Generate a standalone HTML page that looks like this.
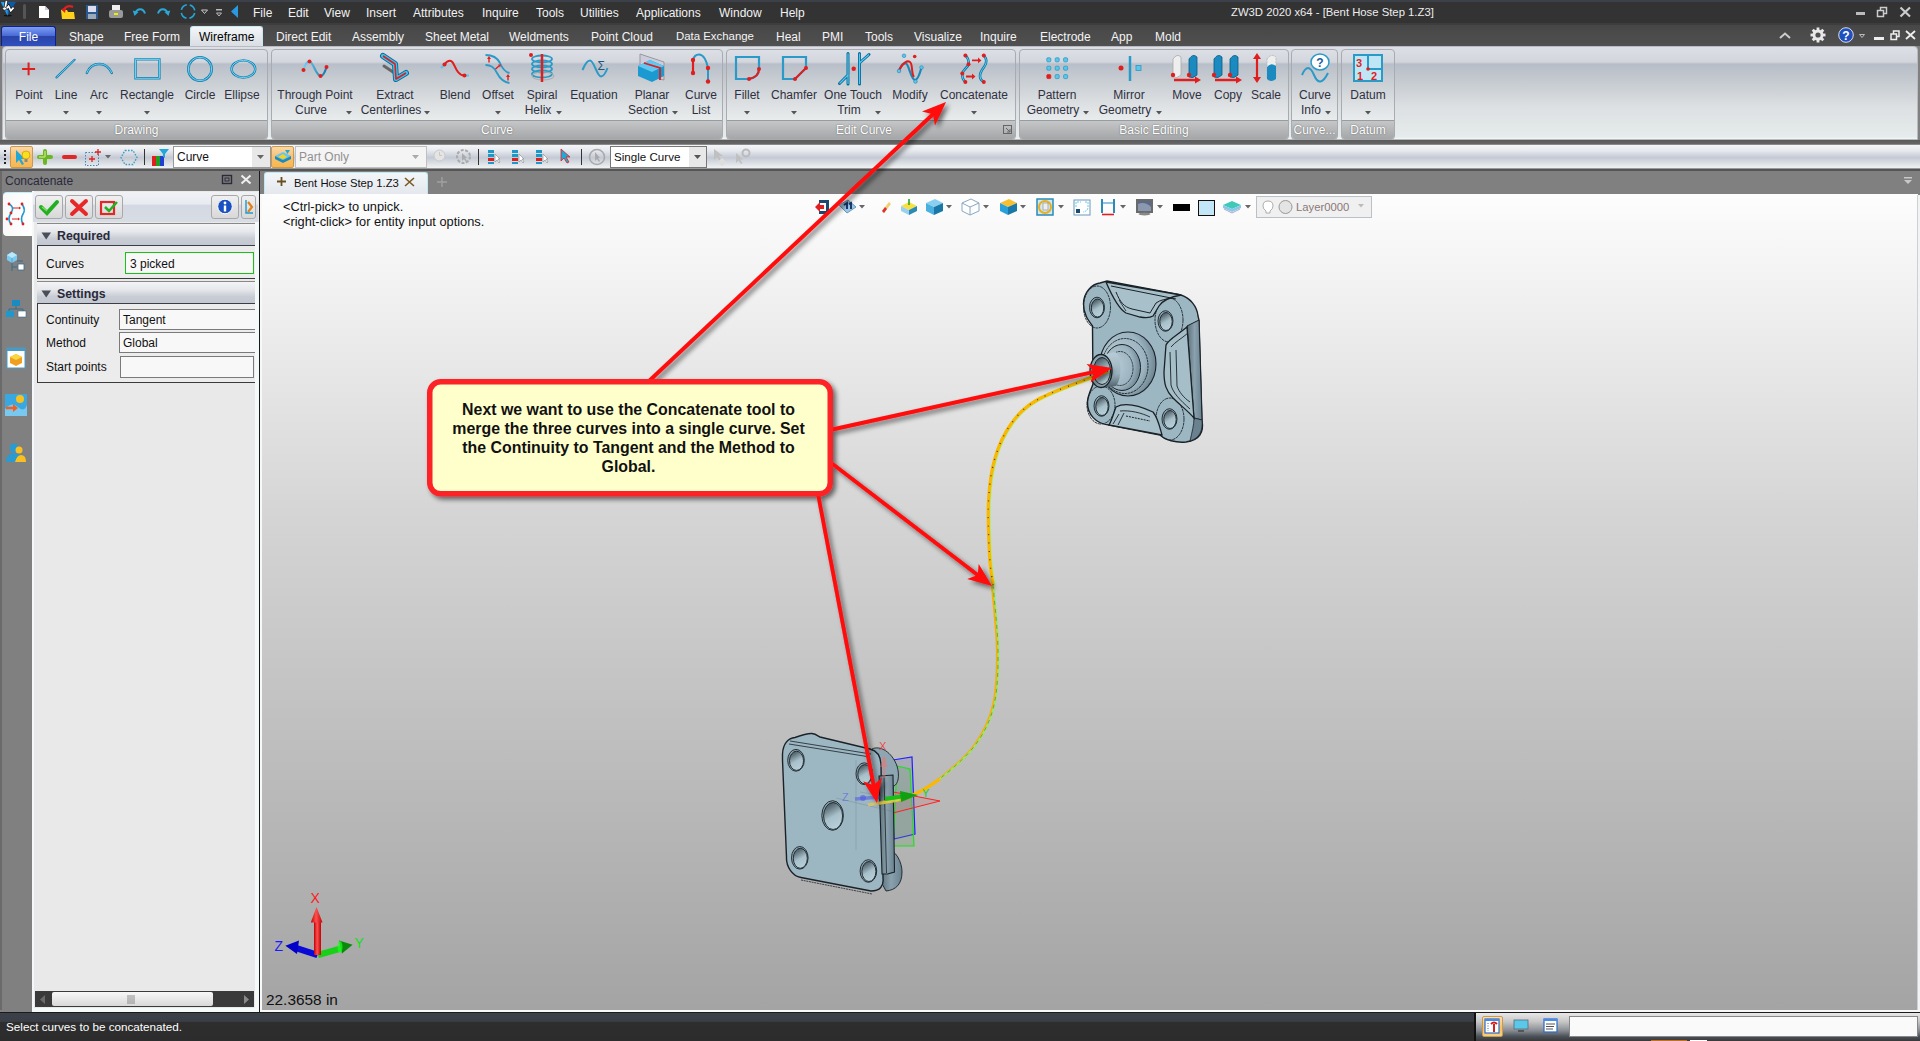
<!DOCTYPE html><html><head><meta charset="utf-8"><style>
html,body{margin:0;padding:0;width:1920px;height:1041px;overflow:hidden;background:#808080}
body div{position:absolute;box-sizing:border-box}
.t{white-space:nowrap;line-height:1;font-family:"Liberation Sans",sans-serif}
svg{overflow:visible}
</style></head><body>
<div style="left:0px;top:0px;width:1920px;height:23px;background:#333333"></div>
<div style="left:0px;top:0px;width:1920px;height:2px;background:#3c4048"></div>
<div style="left:0px;top:23px;width:1920px;height:3px;background:#3d3d3d"></div>
<div style="left:0px;top:25px;width:1920px;height:21px;background:linear-gradient(#474747,#505050)"></div>
<svg style="position:absolute;left:0px;top:0px;" width="18" height="18" viewBox="0 0 18 18"><ellipse cx="7.8" cy="15.6" rx="4" ry="0.9" fill="#111"/><path d="M0.8 1.9 L16 1.9 L7.5 15.8Z" fill="#0a5aa8"/><path d="M0.8 1.9 L8 2 L7.5 15.8Z" fill="#2a9ae8"/><path d="M3 3 L8 5 L5 8Z" fill="#30d0f8"/><path d="M6.5 0.8 L5.3 7.2 M13.6 7.6 L10.8 10.6 L8.6 6.2 L6 9" stroke="#111" stroke-width="3.2" fill="none"/><path d="M6.5 0.8 L5.3 7.2 M13.6 7.6 L10.8 10.6 L8.6 6.2 L6 9" stroke="#fff" stroke-width="1.8" fill="none"/><ellipse cx="4.6" cy="8.6" rx="1.9" ry="1.6" fill="#fff" stroke="#111" stroke-width="0.6"/></svg>
<div style="left:23px;top:4px;width:3px;height:15px;background:#555;border-radius:2px"></div>
<svg style="position:absolute;left:38px;top:5px;" width="12" height="14" viewBox="0 0 12 14"><path d="M1 1 H7 L11 5 V13 H1 Z" fill="#fff"/><path d="M7 1 V5 H11" fill="#ccd" /></svg>
<svg style="position:absolute;left:60px;top:4px;" width="17" height="16" viewBox="0 0 17 16"><path d="M2 8 H14 L15 15 H3 Z" fill="#f5c000"/><path d="M1 6 H7 L8 8 H14 V15 H2Z" fill="#ffd21a"/><path d="M3 7 Q7 0 13 3" stroke="#e02020" stroke-width="2.2" fill="none"/><path d="M1 5 L5 9 L6 4Z" fill="#e02020"/></svg>
<svg style="position:absolute;left:85px;top:4px;" width="14" height="16" viewBox="0 0 14 16"><rect x="1" y="1" width="12" height="14" fill="#2a5a90"/><rect x="3" y="2" width="8" height="6" fill="#dde"/><rect x="3" y="10" width="8" height="5" fill="#9ab"/></svg>
<svg style="position:absolute;left:108px;top:5px;" width="16" height="14" viewBox="0 0 16 14"><rect x="4" y="0" width="8" height="5" fill="#eee"/><rect x="1" y="5" width="14" height="8" rx="2" fill="#999"/><rect x="6" y="8" width="4" height="2" fill="#ee0"/></svg>
<svg style="position:absolute;left:132px;top:7px;" width="14" height="9" viewBox="0 0 14 9"><path d="M3.5 6 C5 1.5 11 0.5 13 6.5" stroke="#2aa8d8" stroke-width="2" fill="none"/><path d="M0.8 3.5 L6.5 5 L2.5 9Z" fill="#2aa8d8"/></svg>
<svg style="position:absolute;left:157px;top:7px;" width="14" height="9" viewBox="0 0 14 9"><path d="M10.5 6 C9 1.5 3 0.5 1 6.5" stroke="#2aa8d8" stroke-width="2" fill="none"/><path d="M13.2 3.5 L7.5 5 L11.5 9Z" fill="#2aa8d8"/></svg>
<svg style="position:absolute;left:180px;top:4px;" width="16" height="16" viewBox="0 0 16 16"><circle cx="8" cy="7.5" r="6.8" stroke="#22a8d8" stroke-width="1.6" fill="none" stroke-dasharray="7.7 3" stroke-dashoffset="9.2"/></svg>
<svg style="position:absolute;left:201px;top:9px;" width="7" height="6" viewBox="0 0 7 6"><path d="M0.5 1 L6.5 1 L3.5 4.5Z" fill="none" stroke="#ccc" stroke-width="1"/></svg>
<svg style="position:absolute;left:216px;top:9px;" width="7" height="8" viewBox="0 0 7 8"><rect x="0" y="0" width="6" height="1.5" fill="#bbb"/><path d="M0.5 4 L5.5 4 L3 7Z" fill="none" stroke="#bbb"/></svg>
<svg style="position:absolute;left:231px;top:5px;" width="8" height="13" viewBox="0 0 8 13"><path d="M7 0 L0 6.5 L7 13Z" fill="#2a9ae0"/></svg>
<div class="t" style="left:253px;top:6.8px;font-size:12px;color:#f2f2f2;font-weight:400;">File</div>
<div class="t" style="left:288px;top:6.8px;font-size:12px;color:#f2f2f2;font-weight:400;">Edit</div>
<div class="t" style="left:324px;top:6.8px;font-size:12px;color:#f2f2f2;font-weight:400;">View</div>
<div class="t" style="left:366px;top:6.8px;font-size:12px;color:#f2f2f2;font-weight:400;">Insert</div>
<div class="t" style="left:413px;top:6.8px;font-size:12px;color:#f2f2f2;font-weight:400;">Attributes</div>
<div class="t" style="left:482px;top:6.8px;font-size:12px;color:#f2f2f2;font-weight:400;">Inquire</div>
<div class="t" style="left:536px;top:6.8px;font-size:12px;color:#f2f2f2;font-weight:400;">Tools</div>
<div class="t" style="left:580px;top:6.8px;font-size:12px;color:#f2f2f2;font-weight:400;">Utilities</div>
<div class="t" style="left:636px;top:6.8px;font-size:12px;color:#f2f2f2;font-weight:400;">Applications</div>
<div class="t" style="left:719px;top:6.8px;font-size:12px;color:#f2f2f2;font-weight:400;">Window</div>
<div class="t" style="left:780px;top:6.8px;font-size:12px;color:#f2f2f2;font-weight:400;">Help</div>
<div class="t" style="left:1231px;top:7.4px;font-size:11.3px;color:#eeeeee;font-weight:400;">ZW3D 2020 x64 - [Bent Hose Step 1.Z3]</div>
<div style="left:1856px;top:12px;width:9px;height:3px;background:#bbb"></div>
<svg style="position:absolute;left:1876px;top:6px;" width="12" height="12" viewBox="0 0 12 12"><rect x="1.5" y="4.5" width="6" height="6" fill="none" stroke="#ccc" stroke-width="1.5"/><path d="M4.5 4.5 V1.5 H10.5 V7.5 H7.5" fill="none" stroke="#ccc" stroke-width="1.5"/></svg>
<svg style="position:absolute;left:1899px;top:6px;" width="13" height="12" viewBox="0 0 13 12"><path d="M1.5 1.5 L11 10.5 M11 1.5 L1.5 10.5" stroke="#ccc" stroke-width="2.2"/></svg>
<div style="left:1px;top:26px;width:55px;height:20px;background:linear-gradient(#7c9ef0 0%,#4a6ad8 45%,#2a44a8 50%,#3050c0 100%);border:1px solid #10208a;border-bottom:none;border-radius:3px 3px 0 0"></div>
<div class="t" style="left:-271.5px;width:600px;text-align:center;top:30.8px;font-size:12px;color:#ffffff;font-weight:400;">File</div>
<div style="left:190px;top:26px;width:73px;height:21px;background:linear-gradient(#f4f6f8,#d8dde3);border:1px solid #c8e8f0;border-bottom:none;border-radius:3px 3px 0 0"></div>
<div class="t" style="left:69px;top:30.8px;font-size:12px;color:#f4f4f4;font-weight:400;">Shape</div>
<div class="t" style="left:124px;top:30.8px;font-size:12px;color:#f4f4f4;font-weight:400;">Free Form</div>
<div class="t" style="left:199px;top:30.8px;font-size:12px;color:#000;font-weight:400;">Wireframe</div>
<div class="t" style="left:276px;top:30.8px;font-size:12px;color:#f4f4f4;font-weight:400;">Direct Edit</div>
<div class="t" style="left:352px;top:30.8px;font-size:12px;color:#f4f4f4;font-weight:400;">Assembly</div>
<div class="t" style="left:425px;top:30.8px;font-size:12px;color:#f4f4f4;font-weight:400;">Sheet Metal</div>
<div class="t" style="left:509px;top:30.8px;font-size:12px;color:#f4f4f4;font-weight:400;">Weldments</div>
<div class="t" style="left:591px;top:30.8px;font-size:12px;color:#f4f4f4;font-weight:400;">Point Cloud</div>
<div class="t" style="left:676px;top:31.3px;font-size:11.4px;color:#f4f4f4;font-weight:400;">Data Exchange</div>
<div class="t" style="left:776px;top:30.8px;font-size:12px;color:#f4f4f4;font-weight:400;">Heal</div>
<div class="t" style="left:822px;top:30.8px;font-size:12px;color:#f4f4f4;font-weight:400;">PMI</div>
<div class="t" style="left:865px;top:30.8px;font-size:12px;color:#f4f4f4;font-weight:400;">Tools</div>
<div class="t" style="left:914px;top:30.8px;font-size:12px;color:#f4f4f4;font-weight:400;">Visualize</div>
<div class="t" style="left:980px;top:30.8px;font-size:12px;color:#f4f4f4;font-weight:400;">Inquire</div>
<div class="t" style="left:1040px;top:30.8px;font-size:12px;color:#f4f4f4;font-weight:400;">Electrode</div>
<div class="t" style="left:1111px;top:30.8px;font-size:12px;color:#f4f4f4;font-weight:400;">App</div>
<div class="t" style="left:1155px;top:30.8px;font-size:12px;color:#f4f4f4;font-weight:400;">Mold</div>
<svg style="position:absolute;left:1779px;top:32px;" width="12" height="7" viewBox="0 0 12 7"><path d="M1 6 L6 1.5 L11 6" stroke="#ccc" stroke-width="2" fill="none"/></svg>
<svg style="position:absolute;left:1810px;top:27px;" width="16" height="16" viewBox="0 0 16 16"><g fill="#e8e8e8"><circle cx="8" cy="8" r="5.5"/><rect x="6.6" y="0.5" width="2.8" height="4" transform="rotate(0 8 8)"/><rect x="6.6" y="0.5" width="2.8" height="4" transform="rotate(45 8 8)"/><rect x="6.6" y="0.5" width="2.8" height="4" transform="rotate(90 8 8)"/><rect x="6.6" y="0.5" width="2.8" height="4" transform="rotate(135 8 8)"/><rect x="6.6" y="0.5" width="2.8" height="4" transform="rotate(180 8 8)"/><rect x="6.6" y="0.5" width="2.8" height="4" transform="rotate(225 8 8)"/><rect x="6.6" y="0.5" width="2.8" height="4" transform="rotate(270 8 8)"/><rect x="6.6" y="0.5" width="2.8" height="4" transform="rotate(315 8 8)"/></g><circle cx="8" cy="8" r="2.6" fill="#505050"/></svg>
<svg style="position:absolute;left:1838px;top:27px;" width="16" height="16" viewBox="0 0 16 16"><circle cx="8" cy="8" r="7.3" fill="#2050c0" stroke="#fff" stroke-width="0.8"/><text x="8" y="12.5" font-size="12" font-weight="700" fill="#fff" text-anchor="middle" font-family="Liberation Sans">?</text></svg>
<svg style="position:absolute;left:1859px;top:34px;" width="6" height="4" viewBox="0 0 6 4"><path d="M0.5 0.5 L5.5 0.5 L3 3.5Z" fill="none" stroke="#bbb"/></svg>
<div style="left:1874px;top:37px;width:10px;height:3px;background:#eee"></div>
<svg style="position:absolute;left:1890px;top:30px;" width="10" height="11" viewBox="0 0 10 11"><rect x="1" y="4" width="5.5" height="5.5" fill="none" stroke="#eee" stroke-width="1.5"/><path d="M3.5 4 V1 H9 V6.5 H6.5" fill="none" stroke="#eee" stroke-width="1.5"/></svg>
<svg style="position:absolute;left:1905px;top:30px;" width="11" height="10" viewBox="0 0 11 10"><path d="M1 1 L10 9 M10 1 L1 9" stroke="#eee" stroke-width="1.8"/></svg>
<div style="left:2px;top:46px;width:1916px;height:94px;background:linear-gradient(#dcdfe5 0px,#d2d6dc 15px,#b7bdc7 17px,#c6cbd1 35px,#dce0e2 60px,#e6ebec 90px,#f4f8f8 92px);border-radius:4px 4px 0 0;border:1px solid #b8bcc0"></div>
<div style="left:5px;top:49px;width:263px;height:91px;border:1px solid #a8acb0;border-radius:4px;background:linear-gradient(#dcdfe5 0px,#d3d7dd 12px,#b9bfc9 14px,#c8cdd3 30px,#dde1e3 55px,#e8eced 70px)"></div>
<div style="left:6px;top:120px;width:261px;height:19px;background:linear-gradient(#c4c6c8,#a4a6a8);border-top:1px solid #989ca0;border-radius:0 0 3px 3px"></div>
<div class="t" style="left:-163.5px;width:600px;text-align:center;top:123.8px;font-size:12px;color:#ffffff;font-weight:400;text-shadow:0 0 1.5px #555">Drawing</div>
<div style="left:271px;top:49px;width:452px;height:91px;border:1px solid #a8acb0;border-radius:4px;background:linear-gradient(#dcdfe5 0px,#d3d7dd 12px,#b9bfc9 14px,#c8cdd3 30px,#dde1e3 55px,#e8eced 70px)"></div>
<div style="left:272px;top:120px;width:450px;height:19px;background:linear-gradient(#c4c6c8,#a4a6a8);border-top:1px solid #989ca0;border-radius:0 0 3px 3px"></div>
<div class="t" style="left:197.0px;width:600px;text-align:center;top:123.8px;font-size:12px;color:#ffffff;font-weight:400;text-shadow:0 0 1.5px #555">Curve</div>
<div style="left:726px;top:49px;width:290px;height:91px;border:1px solid #a8acb0;border-radius:4px;background:linear-gradient(#dcdfe5 0px,#d3d7dd 12px,#b9bfc9 14px,#c8cdd3 30px,#dde1e3 55px,#e8eced 70px)"></div>
<div style="left:727px;top:120px;width:288px;height:19px;background:linear-gradient(#c4c6c8,#a4a6a8);border-top:1px solid #989ca0;border-radius:0 0 3px 3px"></div>
<div class="t" style="left:564px;width:600px;text-align:center;top:123.8px;font-size:12px;color:#ffffff;font-weight:400;text-shadow:0 0 1.5px #555">Edit Curve</div>
<div style="left:1019px;top:49px;width:270px;height:91px;border:1px solid #a8acb0;border-radius:4px;background:linear-gradient(#dcdfe5 0px,#d3d7dd 12px,#b9bfc9 14px,#c8cdd3 30px,#dde1e3 55px,#e8eced 70px)"></div>
<div style="left:1020px;top:120px;width:268px;height:19px;background:linear-gradient(#c4c6c8,#a4a6a8);border-top:1px solid #989ca0;border-radius:0 0 3px 3px"></div>
<div class="t" style="left:854.0px;width:600px;text-align:center;top:123.8px;font-size:12px;color:#ffffff;font-weight:400;text-shadow:0 0 1.5px #555">Basic Editing</div>
<div style="left:1291px;top:49px;width:47px;height:91px;border:1px solid #a8acb0;border-radius:4px;background:linear-gradient(#dcdfe5 0px,#d3d7dd 12px,#b9bfc9 14px,#c8cdd3 30px,#dde1e3 55px,#e8eced 70px)"></div>
<div style="left:1292px;top:120px;width:45px;height:19px;background:linear-gradient(#c4c6c8,#a4a6a8);border-top:1px solid #989ca0;border-radius:0 0 3px 3px"></div>
<div class="t" style="left:1014.5px;width:600px;text-align:center;top:123.8px;font-size:12px;color:#ffffff;font-weight:400;text-shadow:0 0 1.5px #555">Curve...</div>
<div style="left:1341px;top:49px;width:54px;height:91px;border:1px solid #a8acb0;border-radius:4px;background:linear-gradient(#dcdfe5 0px,#d3d7dd 12px,#b9bfc9 14px,#c8cdd3 30px,#dde1e3 55px,#e8eced 70px)"></div>
<div style="left:1342px;top:120px;width:52px;height:19px;background:linear-gradient(#c4c6c8,#a4a6a8);border-top:1px solid #989ca0;border-radius:0 0 3px 3px"></div>
<div class="t" style="left:1068.0px;width:600px;text-align:center;top:123.8px;font-size:12px;color:#ffffff;font-weight:400;text-shadow:0 0 1.5px #555">Datum</div>
<svg style="position:absolute;left:16px;top:56px;" width="26" height="26" viewBox="0 0 26 26"><path d="M12.6 6.6 V19.3 M6.1 13 H19.1" stroke="#e01e1e" stroke-width="2"/></svg>
<div class="t" style="left:-271px;width:600px;text-align:center;top:88.8px;font-size:12px;color:#303040;font-weight:400;">Point</div>
<svg style="position:absolute;left:26px;top:111px;" width="7" height="4" viewBox="0 0 7 4"><path d="M0 0 L6 0 L3 3.5Z" fill="#555"/></svg>
<svg style="position:absolute;left:53px;top:56px;" width="26" height="26" viewBox="0 0 26 26"><path d="M3.5 21.4 L21.6 3.8" stroke="#1a80b0" stroke-width="2.2" fill="none" stroke-linecap="round"/><path d="M3.5 21.4 L21.6 3.8" stroke="#70d8f8" stroke-width="0.88" fill="none"/></svg>
<div class="t" style="left:-234px;width:600px;text-align:center;top:88.8px;font-size:12px;color:#303040;font-weight:400;">Line</div>
<svg style="position:absolute;left:63px;top:111px;" width="7" height="4" viewBox="0 0 7 4"><path d="M0 0 L6 0 L3 3.5Z" fill="#555"/></svg>
<svg style="position:absolute;left:86px;top:56px;" width="28" height="26" viewBox="0 0 28 26"><path d="M0.8 17 C4 9 10 8 13.3 8 C17 8 22 9 25.8 17" stroke="#1a80b0" stroke-width="2.4" fill="none" stroke-linecap="round"/><path d="M0.8 17 C4 9 10 8 13.3 8 C17 8 22 9 25.8 17" stroke="#70d8f8" stroke-width="0.96" fill="none"/></svg>
<div class="t" style="left:-201px;width:600px;text-align:center;top:88.8px;font-size:12px;color:#303040;font-weight:400;">Arc</div>
<svg style="position:absolute;left:96px;top:111px;" width="7" height="4" viewBox="0 0 7 4"><path d="M0 0 L6 0 L3 3.5Z" fill="#555"/></svg>
<svg style="position:absolute;left:134px;top:56px;" width="28" height="26" viewBox="0 0 28 26"><path d="M1.5 3.4 H25.4 V22.3 H1.5Z" stroke="#1a80b0" stroke-width="2.4" fill="none" stroke-linecap="round"/><path d="M1.5 3.4 H25.4 V22.3 H1.5Z" stroke="#70d8f8" stroke-width="0.96" fill="none"/></svg>
<div class="t" style="left:-153px;width:600px;text-align:center;top:88.8px;font-size:12px;color:#303040;font-weight:400;">Rectangle</div>
<svg style="position:absolute;left:144px;top:111px;" width="7" height="4" viewBox="0 0 7 4"><path d="M0 0 L6 0 L3 3.5Z" fill="#555"/></svg>
<svg style="position:absolute;left:187px;top:56px;" width="26" height="26" viewBox="0 0 26 26"><circle cx="13" cy="13" r="11.7" stroke="#1a80b0" stroke-width="2.6" fill="none"/><circle cx="13" cy="13" r="11.7" stroke="#70d8f8" stroke-width="1" fill="none"/></svg>
<div class="t" style="left:-100px;width:600px;text-align:center;top:88.8px;font-size:12px;color:#303040;font-weight:400;">Circle</div>
<svg style="position:absolute;left:230px;top:56px;" width="28" height="26" viewBox="0 0 28 26"><ellipse cx="13.4" cy="13" rx="11.9" ry="8.6" stroke="#1a80b0" stroke-width="2.4" fill="none"/><ellipse cx="13.4" cy="13" rx="11.9" ry="8.6" stroke="#70d8f8" stroke-width="1" fill="none"/></svg>
<div class="t" style="left:-58px;width:600px;text-align:center;top:88.8px;font-size:12px;color:#303040;font-weight:400;">Ellipse</div>
<svg style="position:absolute;left:300px;top:56px;" width="30" height="26" viewBox="0 0 30 26"><defs><linearGradient id="wg" x1="0" x2="1"><stop offset="0" stop-color="#70d0f0"/><stop offset="1" stop-color="#1a78a8"/></linearGradient></defs><path d="M3.5 14 C5 8 7 5.5 9.5 5.5 C13 5.5 16 20 20.5 20 C23 20 25 16 26.5 11" stroke="url(#wg)" stroke-width="2.2" fill="none"/><g fill="#e01e1e"><circle cx="3.5" cy="14" r="2"/><circle cx="9.5" cy="5.5" r="2"/><circle cx="20.5" cy="20" r="2"/><circle cx="26.5" cy="11" r="2"/></g></svg>
<div class="t" style="left:15px;width:600px;text-align:center;top:88.8px;font-size:12px;color:#303040;font-weight:400;">Through Point</div>
<div class="t" style="left:11px;width:600px;text-align:center;top:103.8px;font-size:12px;color:#303040;font-weight:400;">Curve</div>
<svg style="position:absolute;left:346px;top:111px;" width="7" height="4" viewBox="0 0 7 4"><path d="M0 0 L6 0 L3 3.5Z" fill="#555"/></svg>
<svg style="position:absolute;left:378px;top:52px;" width="34" height="34" viewBox="0 0 34 34"><path d="M6 14 L18 22" stroke="#666" stroke-width="3" stroke-linecap="round"/><path d="M5 4 L17 12 L18 27 L28 21" stroke="#0a6a98" stroke-width="6" fill="none" stroke-linejoin="round" stroke-linecap="round"/><path d="M5 4 L17 12 L18 27 L28 21" stroke="#40c0e8" stroke-width="4.2" fill="none" stroke-linejoin="round" stroke-linecap="round"/><path d="M5 4 L17 12 L18 27 L28 21" stroke="#e01e1e" stroke-width="1.6" fill="none" stroke-linejoin="round"/></svg>
<div class="t" style="left:95px;width:600px;text-align:center;top:88.8px;font-size:12px;color:#303040;font-weight:400;">Extract</div>
<div class="t" style="left:91px;width:600px;text-align:center;top:103.8px;font-size:12px;color:#303040;font-weight:400;">Centerlines</div>
<svg style="position:absolute;left:424px;top:111px;" width="7" height="4" viewBox="0 0 7 4"><path d="M0 0 L6 0 L3 3.5Z" fill="#555"/></svg>
<svg style="position:absolute;left:439px;top:56px;" width="32" height="24" viewBox="0 0 32 24"><path d="M2 12 L5.5 8.5" stroke="#5cc6e8" stroke-width="2.2"/><path d="M5.5 8.5 C8 5 10 4.5 12 5 C15 6 16 13 19 16 C21 18.5 23 19.5 25.5 19.5" stroke="#e01e1e" stroke-width="2" fill="none"/><path d="M25.5 19.5 L30 19.5" stroke="#5cc6e8" stroke-width="2.2"/><circle cx="5.5" cy="8.5" r="2" fill="#e01e1e"/><circle cx="25.5" cy="19.5" r="2" fill="#e01e1e"/></svg>
<div class="t" style="left:155px;width:600px;text-align:center;top:88.8px;font-size:12px;color:#303040;font-weight:400;">Blend</div>
<svg style="position:absolute;left:484px;top:53px;" width="28" height="32" viewBox="0 0 28 32"><path d="M1.5 2 C8 2 13 4 16 10 C18 15 21 19 25.5 20" stroke="#2a9ac8" stroke-width="1.8" fill="none"/><path d="M1.5 12 C7 12 10 14 13 20 C16 26 19 29 25.5 30" stroke="#2a9ac8" stroke-width="1.8" fill="none"/><path d="M5 9.5 V5.5 M11.5 16 L15 13 M24 27.5 V23.5" stroke="#e01e1e" stroke-width="1.4"/><path d="M3 6 L5 3 L7 6Z M14 11.5 L17 11.5 L16 14.5Z M22 24 L24 21 L26 24Z" fill="#e01e1e"/></svg>
<div class="t" style="left:198px;width:600px;text-align:center;top:88.8px;font-size:12px;color:#303040;font-weight:400;">Offset</div>
<svg style="position:absolute;left:495px;top:111px;" width="7" height="4" viewBox="0 0 7 4"><path d="M0 0 L6 0 L3 3.5Z" fill="#555"/></svg>
<svg style="position:absolute;left:528px;top:52px;" width="28" height="32" viewBox="0 0 28 32"><g stroke="#2a9ac8" stroke-width="1.8" fill="none"><ellipse cx="14" cy="7" rx="10" ry="3.5"/><ellipse cx="14" cy="12" rx="10" ry="3.5"/><ellipse cx="14" cy="17" rx="10" ry="3.5"/><ellipse cx="14" cy="22" rx="10" ry="3.5"/></g><ellipse cx="15" cy="24" rx="11" ry="4" fill="none" stroke="#aaa" stroke-width="1"/><path d="M14 2 V30" stroke="#e01e1e" stroke-width="2.5"/><circle cx="3" cy="3" r="2" fill="#e01e1e"/></svg>
<div class="t" style="left:242px;width:600px;text-align:center;top:88.8px;font-size:12px;color:#303040;font-weight:400;">Spiral</div>
<div class="t" style="left:238px;width:600px;text-align:center;top:103.8px;font-size:12px;color:#303040;font-weight:400;">Helix</div>
<svg style="position:absolute;left:556px;top:111px;" width="7" height="4" viewBox="0 0 7 4"><path d="M0 0 L6 0 L3 3.5Z" fill="#555"/></svg>
<svg style="position:absolute;left:581px;top:58px;" width="28" height="24" viewBox="0 0 28 24"><path d="M1.5 12 C4 6 6 2.5 9 2.5 C13 2.5 16 18.5 20 18.5 C23 18.5 25 14 26.5 10" stroke="#2a9ac8" stroke-width="2" fill="none"/><text x="16.5" y="12" font-size="12" fill="#1a5a80" font-family="Liberation Sans">&#931;</text></svg>
<div class="t" style="left:294px;width:600px;text-align:center;top:88.8px;font-size:12px;color:#303040;font-weight:400;">Equation</div>
<svg style="position:absolute;left:636px;top:52px;" width="32" height="32" viewBox="0 0 32 32"><path d="M4 2 L28 10 L28 28 L4 22Z" fill="#ccd" stroke="#999"/><path d="M2 14 L14 8 L28 14 L28 24 L16 30 L2 24Z" fill="#1a9ad0"/><path d="M2 14 L14 8 L28 14 L16 20Z" fill="#60c8f0"/><path d="M8 11 L24 16 V28" stroke="#e01e1e" stroke-width="1.8" fill="none"/></svg>
<div class="t" style="left:352px;width:600px;text-align:center;top:88.8px;font-size:12px;color:#303040;font-weight:400;">Planar</div>
<div class="t" style="left:348px;width:600px;text-align:center;top:103.8px;font-size:12px;color:#303040;font-weight:400;">Section</div>
<svg style="position:absolute;left:672px;top:111px;" width="7" height="4" viewBox="0 0 7 4"><path d="M0 0 L6 0 L3 3.5Z" fill="#555"/></svg>
<svg style="position:absolute;left:688px;top:53px;" width="26" height="30" viewBox="0 0 26 30"><path d="M5 7 C6 3 8 1.5 11 1.5 C15 1.5 18 6 20 15 V28.5" stroke="#2a9ac8" stroke-width="2" fill="none"/><path d="M5 7 V20" stroke="#e01e1e" stroke-width="2.2"/><g fill="#e01e1e"><circle cx="5" cy="7" r="2.2"/><circle cx="5" cy="20" r="2.2"/><circle cx="20" cy="15" r="2.2"/><circle cx="20" cy="28.5" r="2.2"/></g></svg>
<div class="t" style="left:401px;width:600px;text-align:center;top:88.8px;font-size:12px;color:#303040;font-weight:400;">Curve</div>
<div class="t" style="left:401px;width:600px;text-align:center;top:103.8px;font-size:12px;color:#303040;font-weight:400;">List</div>
<svg style="position:absolute;left:734px;top:55px;" width="26" height="27" viewBox="0 0 26 27"><path d="M2 2 H25 V14 Q25 22 15 24 H2Z" stroke="#2a9ac8" stroke-width="2.2" fill="none"/><path d="M15 24 Q25 22 25 14" stroke="#e01e1e" stroke-width="2" fill="none"/><circle cx="25" cy="14" r="2" fill="#e01e1e"/><circle cx="15" cy="24" r="2" fill="#e01e1e"/></svg>
<div class="t" style="left:447px;width:600px;text-align:center;top:88.8px;font-size:12px;color:#303040;font-weight:400;">Fillet</div>
<svg style="position:absolute;left:744px;top:111px;" width="7" height="4" viewBox="0 0 7 4"><path d="M0 0 L6 0 L3 3.5Z" fill="#555"/></svg>
<svg style="position:absolute;left:781px;top:55px;" width="26" height="27" viewBox="0 0 26 27"><path d="M2 2 H25 V13 L14 24 H2Z" stroke="#2a9ac8" stroke-width="2.2" fill="none"/><path d="M25 13 L14 24" stroke="#e01e1e" stroke-width="2"/><circle cx="25" cy="13" r="2" fill="#e01e1e"/><circle cx="14" cy="24" r="2" fill="#e01e1e"/></svg>
<div class="t" style="left:494px;width:600px;text-align:center;top:88.8px;font-size:12px;color:#303040;font-weight:400;">Chamfer</div>
<svg style="position:absolute;left:791px;top:111px;" width="7" height="4" viewBox="0 0 7 4"><path d="M0 0 L6 0 L3 3.5Z" fill="#555"/></svg>
<svg style="position:absolute;left:836px;top:52px;" width="36" height="34" viewBox="0 0 36 34"><path d="M12 1.5 V32 M12 23 L3.5 31.5 M23.5 1.5 V32 M23.5 11 L33 2.5" stroke="#0a6a98" stroke-width="3" stroke-linecap="round"/><path d="M12 1.5 V32 M12 23 L3.5 31.5 M23.5 1.5 V32 M23.5 11 L33 2.5" stroke="#50c8f0" stroke-width="1.2"/><circle cx="17.7" cy="16.8" r="2.2" fill="#e01e1e"/></svg>
<div class="t" style="left:553px;width:600px;text-align:center;top:88.8px;font-size:12px;color:#303040;font-weight:400;">One Touch</div>
<div class="t" style="left:549px;width:600px;text-align:center;top:103.8px;font-size:12px;color:#303040;font-weight:400;">Trim</div>
<svg style="position:absolute;left:875px;top:111px;" width="7" height="4" viewBox="0 0 7 4"><path d="M0 0 L6 0 L3 3.5Z" fill="#555"/></svg>
<svg style="position:absolute;left:896px;top:53px;" width="28" height="32" viewBox="0 0 28 32"><path d="M3 18 C6 10 8 10 10 10.5 C13 11.5 15 27 19 27 C22 27 24 20 25.5 14.5" stroke="#1a88b8" stroke-width="2.2" fill="none"/><path d="M3 17 C7 10 11 7 14 9 C17 11 15 20 18 24" stroke="#e01e1e" stroke-width="2" fill="none"/><g fill="#5cc6e8" stroke="#1a88b8" stroke-width="0.6"><circle cx="8" cy="2.8" r="1.8"/><circle cx="3" cy="18" r="1.8"/><circle cx="25.5" cy="14.5" r="1.8"/><circle cx="19.5" cy="28.5" r="1.8"/></g><circle cx="18.7" cy="3.5" r="1.8" fill="#e01e1e"/></svg>
<div class="t" style="left:610px;width:600px;text-align:center;top:88.8px;font-size:12px;color:#303040;font-weight:400;">Modify</div>
<svg style="position:absolute;left:958px;top:52px;" width="32" height="32" viewBox="0 0 32 32"><path d="M7.4 3.4 C10 6 11 9 10.5 12.2 C10 15 5 18 4.3 21.4 C4 25 5 28 7.4 29.9" stroke="#0a78a8" stroke-width="2.6" fill="none"/><path d="M7.4 3.4 C10 6 11 9 10.5 12.2 C10 15 5 18 4.3 21.4 C4 25 5 28 7.4 29.9" stroke="#60d0f0" stroke-width="1" fill="none"/><path d="M25.8 3.4 C29 7 29 11 26 15 C23 19 22 22 22 24 C22 27 24 29 25.8 29.9" stroke="#0a78a8" stroke-width="2.6" fill="none"/><path d="M25.8 3.4 C29 7 29 11 26 15 C23 19 22 22 22 24 C22 27 24 29 25.8 29.9" stroke="#60d0f0" stroke-width="1" fill="none"/><path d="M14 8.4 H20.5 M8 24.5 H14.5" stroke="#e01e1e" stroke-width="1.8"/><path d="M20 5.5 L23.5 8.4 L20 11.3Z M14 21.6 L17.5 24.5 L14 27.4Z" fill="#e01e1e"/><g fill="#e01e1e"><circle cx="7.4" cy="3.4" r="2"/><circle cx="10.5" cy="12.2" r="2"/><circle cx="4.3" cy="21.4" r="2"/><circle cx="7.4" cy="29.9" r="2"/><circle cx="25.8" cy="3.4" r="2"/><circle cx="25.8" cy="29.9" r="2"/></g></svg>
<div class="t" style="left:674px;width:600px;text-align:center;top:88.8px;font-size:12px;color:#303040;font-weight:400;">Concatenate</div>
<svg style="position:absolute;left:971px;top:111px;" width="7" height="4" viewBox="0 0 7 4"><path d="M0 0 L6 0 L3 3.5Z" fill="#555"/></svg>
<svg style="position:absolute;left:1003px;top:125px;" width="10" height="10" viewBox="0 0 10 10"><rect x="0.5" y="0.5" width="8" height="8" fill="none" stroke="#666"/><path d="M3 3 L7 7 M7 4 V7 H4" stroke="#666" fill="none"/></svg>
<svg style="position:absolute;left:1046px;top:57px;" width="24" height="24" viewBox="0 0 24 24"><rect x="0.8" y="0.8" width="4" height="4" rx="1" fill="#5cc6e8" stroke="#2a9ac8" stroke-width="0.8"/><rect x="0.8" y="9.200000000000001" width="4" height="4" rx="1" fill="#5cc6e8" stroke="#2a9ac8" stroke-width="0.8"/><rect x="0.8" y="17.6" width="4" height="4" rx="1" fill="#e01e1e" stroke="#e01e1e" stroke-width="0.8"/><rect x="9.200000000000001" y="0.8" width="4" height="4" rx="1" fill="#5cc6e8" stroke="#2a9ac8" stroke-width="0.8"/><rect x="9.200000000000001" y="9.200000000000001" width="4" height="4" rx="1" fill="#5cc6e8" stroke="#2a9ac8" stroke-width="0.8"/><rect x="9.200000000000001" y="17.6" width="4" height="4" rx="1" fill="#5cc6e8" stroke="#2a9ac8" stroke-width="0.8"/><rect x="17.6" y="0.8" width="4" height="4" rx="1" fill="#5cc6e8" stroke="#2a9ac8" stroke-width="0.8"/><rect x="17.6" y="9.200000000000001" width="4" height="4" rx="1" fill="#5cc6e8" stroke="#2a9ac8" stroke-width="0.8"/><rect x="17.6" y="17.6" width="4" height="4" rx="1" fill="#5cc6e8" stroke="#2a9ac8" stroke-width="0.8"/></svg>
<div class="t" style="left:757px;width:600px;text-align:center;top:88.8px;font-size:12px;color:#303040;font-weight:400;">Pattern</div>
<div class="t" style="left:753px;width:600px;text-align:center;top:103.8px;font-size:12px;color:#303040;font-weight:400;">Geometry</div>
<svg style="position:absolute;left:1083px;top:111px;" width="7" height="4" viewBox="0 0 7 4"><path d="M0 0 L6 0 L3 3.5Z" fill="#555"/></svg>
<svg style="position:absolute;left:1116px;top:55px;" width="28" height="26" viewBox="0 0 28 26"><path d="M14 1 V26" stroke="#2a9ac8" stroke-width="2.5"/><circle cx="5" cy="13" r="2.5" fill="#e01e1e"/><rect x="20" y="10.5" width="5" height="5" fill="#5cc6e8" stroke="#2a9ac8" stroke-width="0.8"/></svg>
<div class="t" style="left:829px;width:600px;text-align:center;top:88.8px;font-size:12px;color:#303040;font-weight:400;">Mirror</div>
<div class="t" style="left:825px;width:600px;text-align:center;top:103.8px;font-size:12px;color:#303040;font-weight:400;">Geometry</div>
<svg style="position:absolute;left:1156px;top:111px;" width="7" height="4" viewBox="0 0 7 4"><path d="M0 0 L6 0 L3 3.5Z" fill="#555"/></svg>
<svg style="position:absolute;left:1170px;top:53px;" width="32" height="30" viewBox="0 0 32 30"><path d="M3 6 Q7 0 11 4 V22 Q7 26 3 24Z" fill="#eee" stroke="#aaa" stroke-width="0.8"/><path d="M19 6 Q23 0 27 4 V22 Q23 26 19 24Z" fill="#1a8ac0" stroke="#0a5a80" stroke-width="0.8"/><circle cx="3" cy="22" r="2.2" fill="#e01e1e"/><circle cx="19" cy="22" r="2.2" fill="#e01e1e"/><path d="M4 27 H26" stroke="#e01e1e" stroke-width="2.5"/><path d="M25 23.5 L31 27 L25 30.5Z" fill="#e01e1e"/></svg>
<div class="t" style="left:887px;width:600px;text-align:center;top:88.8px;font-size:12px;color:#303040;font-weight:400;">Move</div>
<svg style="position:absolute;left:1211px;top:53px;" width="32" height="30" viewBox="0 0 32 30"><path d="M3 6 Q7 0 11 4 V22 Q7 26 3 24Z" fill="#1a8ac0" stroke="#0a5a80" stroke-width="0.8"/><path d="M19 6 Q23 0 27 4 V22 Q23 26 19 24Z" fill="#1a8ac0" stroke="#0a5a80" stroke-width="0.8"/><circle cx="3" cy="22" r="2.2" fill="#e01e1e"/><circle cx="19" cy="22" r="2.2" fill="#e01e1e"/><path d="M4 27 H26" stroke="#e01e1e" stroke-width="2.5"/><path d="M25 23.5 L31 27 L25 30.5Z" fill="#e01e1e"/></svg>
<div class="t" style="left:928px;width:600px;text-align:center;top:88.8px;font-size:12px;color:#303040;font-weight:400;">Copy</div>
<svg style="position:absolute;left:1250px;top:53px;" width="32" height="30" viewBox="0 0 32 30"><path d="M7 4 V26" stroke="#e01e1e" stroke-width="2.2"/><path d="M3 6 L7 0 L11 6Z M3 24 L7 30 L11 24Z" fill="#e01e1e"/><path d="M17 6 Q21 0 26 4 V24 Q21 30 17 26Z" fill="#eee" stroke="#bbb" stroke-dasharray="2 1"/><path d="M17 14 Q21 9 26 13 V26 Q21 30 17 26Z" fill="#1a8ac0"/></svg>
<div class="t" style="left:966px;width:600px;text-align:center;top:88.8px;font-size:12px;color:#303040;font-weight:400;">Scale</div>
<svg style="position:absolute;left:1300px;top:53px;" width="32" height="30" viewBox="0 0 32 30"><path d="M2 22 Q8 8 14 22 T28 20" stroke="#2a9ac8" stroke-width="2" fill="none"/><ellipse cx="20" cy="9" rx="9" ry="8" fill="#fff" stroke="#2a9ac8" stroke-width="1.5"/><text x="20" y="14" font-size="12" font-weight="700" fill="#1a5aa0" text-anchor="middle" font-family="Liberation Sans">?</text></svg>
<div class="t" style="left:1015px;width:600px;text-align:center;top:88.8px;font-size:12px;color:#303040;font-weight:400;">Curve</div>
<div class="t" style="left:1011px;width:600px;text-align:center;top:103.8px;font-size:12px;color:#303040;font-weight:400;">Info</div>
<svg style="position:absolute;left:1325px;top:111px;" width="7" height="4" viewBox="0 0 7 4"><path d="M0 0 L6 0 L3 3.5Z" fill="#555"/></svg>
<svg style="position:absolute;left:1353px;top:53px;" width="30" height="30" viewBox="0 0 30 30"><rect x="1" y="2" width="28" height="26" fill="#bfe6f5" stroke="#2a9ac8" stroke-width="2"/><path d="M15 2 V16 H29" stroke="#2a9ac8" stroke-width="2" fill="none"/><text x="3" y="14" font-size="11" font-weight="700" fill="#e01e1e" font-family="Liberation Sans">3</text><text x="4" y="27" font-size="11" font-weight="700" fill="#e01e1e" font-family="Liberation Sans">1</text><text x="18" y="27" font-size="11" font-weight="700" fill="#e01e1e" font-family="Liberation Sans">2</text><circle cx="15" cy="16" r="1.8" fill="#e01e1e"/></svg>
<div class="t" style="left:1068px;width:600px;text-align:center;top:88.8px;font-size:12px;color:#303040;font-weight:400;">Datum</div>
<svg style="position:absolute;left:1365px;top:111px;" width="7" height="4" viewBox="0 0 7 4"><path d="M0 0 L6 0 L3 3.5Z" fill="#555"/></svg>
<div style="left:0px;top:140px;width:1920px;height:5px;background:linear-gradient(#5a5a5a,#6a6a6a)"></div>
<div style="left:0px;top:144px;width:1920px;height:25px;background:linear-gradient(#f4f6f8 0%,#e6e9ee 25%,#c4c9d4 55%,#d8dce2 75%,#eff2f3 100%);border-top:1px solid #8a8a8a;border-bottom:1px solid #9a9a9a"></div>
<div style="left:0px;top:169px;width:1920px;height:2px;background:#555"></div>
<div style="left:4px;top:150px;width:2px;height:2px;background:#222"></div>
<div style="left:4px;top:154px;width:2px;height:2px;background:#222"></div>
<div style="left:4px;top:158px;width:2px;height:2px;background:#222"></div>
<div style="left:4px;top:162px;width:2px;height:2px;background:#222"></div>
<div style="left:10px;top:146px;width:23px;height:22px;background:linear-gradient(#fcd8a8,#f8c070 50%,#f8b850 100%);border:1px solid #c89a50;border-radius:2px"></div>
<svg style="position:absolute;left:14px;top:149px;" width="18" height="17" viewBox="0 0 18 17"><path d="M2 1 L2 14 L5 11 L8 16 L10 15 L7 10 L11 10Z" fill="#22a8d8"/><circle cx="12" cy="6" r="4" fill="#f8e020" stroke="#d8a000" stroke-width="0.8"/><rect x="10.5" y="10" width="3" height="3" fill="#888"/></svg>
<svg style="position:absolute;left:37px;top:149px;" width="16" height="16" viewBox="0 0 16 16"><path d="M8 2 V14 M2 8 H14" stroke="#6ab820" stroke-width="4" stroke-linecap="round"/><path d="M8 2 V8 M2 8 H8" stroke="#b8e070" stroke-width="1.5"/></svg>
<svg style="position:absolute;left:61px;top:154px;" width="17" height="6" viewBox="0 0 17 6"><rect x="1" y="1" width="15" height="4" rx="2" fill="#e02828"/></svg>
<svg style="position:absolute;left:84px;top:148px;" width="18" height="19" viewBox="0 0 18 19"><rect x="1.5" y="4.5" width="13" height="13" fill="none" stroke="#3a8ab8" stroke-dasharray="1.5 1.5"/><path d="M5 11 H11 M8 8 V14 M11 4 H17 M14 1 V7" stroke="#e02020" stroke-width="1.3"/></svg>
<svg style="position:absolute;left:105px;top:155px;" width="7" height="4" viewBox="0 0 7 4"><path d="M0 0 H6 L3 3.5Z" fill="#666"/></svg>
<svg style="position:absolute;left:120px;top:149px;" width="18" height="17" viewBox="0 0 18 17"><path d="M5 1.5 H13 L17 8.5 L13 15.5 H5 L1 8.5Z" fill="none" stroke="#3a9ac8" stroke-width="1.3" stroke-dasharray="1.6 1.4"/></svg>
<div style="left:144px;top:149px;width:1px;height:16px;background:#333"></div>
<svg style="position:absolute;left:151px;top:148px;" width="19" height="19" viewBox="0 0 19 19"><rect x="1" y="8" width="4" height="10" fill="#e02020"/><rect x="5" y="8" width="4" height="10" fill="#20a020"/><rect x="9" y="8" width="4" height="10" fill="#2040d0"/><path d="M8 1 H18 L14 6 V10 L12 9 V6Z" fill="#22a8d8"/></svg>
<div style="left:173px;top:146px;width:98px;height:22px;background:#fff;border:1px solid #999"></div>
<div style="left:252px;top:147px;width:18px;height:20px;background:#e8e8e8"></div>
<svg style="position:absolute;left:257px;top:155px;" width="8" height="5" viewBox="0 0 8 5"><path d="M0 0 H7 L3.5 4Z" fill="#666"/></svg>
<div class="t" style="left:177px;top:151.3px;font-size:12px;color:#111;font-weight:400;">Curve</div>
<div style="left:271px;top:146px;width:23px;height:22px;background:linear-gradient(#fcd8a8,#f8c070 50%,#f8b850 100%);border:1px solid #c89a50;border-radius:2px"></div>
<svg style="position:absolute;left:274px;top:149px;" width="18" height="16" viewBox="0 0 18 16"><path d="M1 7 L9 3 L17 7 L9 11Z" fill="#60c8f0"/><path d="M1 7 V10 L9 14 L17 10 V7 L9 11Z" fill="#1a8ac0"/><path d="M4 8 L9 5 L13 8 L9 10Z" fill="#f8d020"/><path d="M11 1 H16 L13.5 5Z" fill="#22a8d8"/></svg>
<div style="left:295px;top:146px;width:132px;height:22px;background:#f4f4f4;border:1px solid #c0c0c0"></div>
<div class="t" style="left:299px;top:151.3px;font-size:12px;color:#909090;font-weight:400;">Part Only</div>
<svg style="position:absolute;left:412px;top:155px;" width="8" height="5" viewBox="0 0 8 5"><path d="M0 0 H7 L3.5 4Z" fill="#aaa"/></svg>
<svg style="position:absolute;left:433px;top:149px;" width="13" height="13" viewBox="0 0 13 13"><circle cx="6.5" cy="6.5" r="5.5" fill="#e4e4e4" stroke="#c8c8c8"/><path d="M6.5 3 V6.5 H9" stroke="#c8c8c8" fill="none"/></svg>
<svg style="position:absolute;left:455px;top:148px;" width="17" height="17" viewBox="0 0 17 17"><circle cx="8.5" cy="8.5" r="6.5" fill="none" stroke="#aaa" stroke-width="2" stroke-dasharray="3 1.5"/><path d="M7 5 L7 13 L9 11 L11 14 L12 13 L10 10 L12 10Z" fill="#aaa"/></svg>
<div style="left:478px;top:149px;width:1px;height:16px;background:#333"></div>
<svg style="position:absolute;left:487px;top:148px;" width="14" height="17" viewBox="0 0 14 17"><rect x="1" y="2" width="6" height="3" fill="#1a9ac8"/><rect x="1" y="6" width="6" height="3" fill="#1a9ac8"/><rect x="1" y="10" width="6" height="3" fill="#e02020"/><rect x="1" y="14" width="6" height="2" fill="#1a9ac8"/><path d="M8 6 L8 14 L10 12 L12 15 L13 14 L11 11 L13 11Z" fill="#fff" stroke="#888" stroke-width="0.6"/></svg>
<svg style="position:absolute;left:511px;top:148px;" width="14" height="17" viewBox="0 0 14 17"><rect x="1" y="2" width="6" height="3" fill="#1a9ac8"/><rect x="1" y="6" width="6" height="3" fill="#1a9ac8"/><rect x="1" y="10" width="6" height="3" fill="#e02020"/><rect x="1" y="14" width="6" height="2" fill="#1a9ac8"/><path d="M8 6 L8 14 L10 12 L12 15 L13 14 L11 11 L13 11Z" fill="#fff" stroke="#888" stroke-width="0.6"/></svg>
<svg style="position:absolute;left:535px;top:148px;" width="14" height="17" viewBox="0 0 14 17"><rect x="1" y="2" width="6" height="3" fill="#1a9ac8"/><rect x="1" y="6" width="6" height="3" fill="#1a9ac8"/><rect x="1" y="10" width="6" height="3" fill="#e02020"/><rect x="1" y="14" width="6" height="2" fill="#1a9ac8"/><path d="M8 6 L8 14 L10 12 L12 15 L13 14 L11 11 L13 11Z" fill="#fff" stroke="#888" stroke-width="0.6"/></svg>
<svg style="position:absolute;left:560px;top:148px;" width="12" height="17" viewBox="0 0 12 17"><path d="M1 1 L1 13 L4 10 L7 15 L9 14 L6 9 L10 9Z" fill="#22a8d8" stroke="#e02020" stroke-width="0.8"/></svg>
<div style="left:581px;top:149px;width:1px;height:16px;background:#333"></div>
<svg style="position:absolute;left:588px;top:148px;" width="18" height="18" viewBox="0 0 18 18"><circle cx="9" cy="9" r="7.5" fill="none" stroke="#aaa" stroke-width="1.6"/><path d="M7 4 L7 13 L9 11 L11 14 L12 13 L10 10 L12 10Z" fill="#aaa"/></svg>
<div style="left:610px;top:146px;width:97px;height:22px;background:#fff;border:1px solid #777"></div>
<div style="left:689px;top:147px;width:17px;height:20px;background:#e8e8e8"></div>
<svg style="position:absolute;left:694px;top:155px;" width="8" height="5" viewBox="0 0 8 5"><path d="M0 0 H7 L3.5 4Z" fill="#555"/></svg>
<div class="t" style="left:614px;top:151.2px;font-size:11.6px;color:#111;font-weight:400;">Single Curve</div>
<svg style="position:absolute;left:712px;top:148px;" width="14" height="18" viewBox="0 0 14 18"><path d="M2 1 L2 12 L5 9 L8 14 L10 13 L7 8 L11 8Z" fill="#c0c0c0"/><rect x="7" y="11" width="6" height="6" fill="#ddd" transform="rotate(45 10 14)"/></svg>
<svg style="position:absolute;left:734px;top:147px;" width="18" height="18" viewBox="0 0 18 18"><path d="M2 6 L2 16 L4.5 13.5 L7 17 L8.5 16 L6 12.5 L9 12.5Z" fill="#c0c0c0"/><circle cx="12" cy="6" r="3.5" fill="none" stroke="#bbb" stroke-width="2"/></svg>
<div style="left:260px;top:171px;width:1660px;height:23px;background:#808080"></div>
<div style="left:264px;top:172px;width:164px;height:22px;background:linear-gradient(#f2f6f8,#e4e8ee);border:1px solid #c0e8f0;border-bottom:none;border-radius:3px 3px 0 0"></div>
<svg style="position:absolute;left:276px;top:176px;" width="11" height="11" viewBox="0 0 11 11"><path d="M5.5 1 V10 M1 5.5 H10" stroke="#6a5020" stroke-width="1.8"/></svg>
<div class="t" style="left:294px;top:178.4px;font-size:11.3px;color:#111;font-weight:400;">Bent Hose Step 1.Z3</div>
<svg style="position:absolute;left:404px;top:177px;" width="11" height="10" viewBox="0 0 11 10"><path d="M1 1 L10 9 M10 1 L1 9" stroke="#7a5a20" stroke-width="1.6"/></svg>
<svg style="position:absolute;left:436px;top:176px;" width="12" height="12" viewBox="0 0 12 12"><path d="M6 1 V11 M1 6 H11" stroke="#a0a0a0" stroke-width="1.4"/></svg>
<svg style="position:absolute;left:1903px;top:177px;" width="10" height="8" viewBox="0 0 10 8"><rect x="1" y="0" width="8" height="1.5" fill="#c8c8c8"/><path d="M1 3 H9 L5 7Z" fill="#c8c8c8"/></svg>
<div style="left:0px;top:171px;width:260px;height:839px;background:#808080"></div>
<div style="left:0px;top:171px;width:2px;height:839px;background:#6a6a6a"></div>
<div class="t" style="left:5px;top:174.8px;font-size:12px;color:#2a2a3a;font-weight:400;">Concatenate</div>
<svg style="position:absolute;left:221px;top:174px;" width="12" height="11" viewBox="0 0 12 11"><rect x="1.5" y="1.5" width="9" height="8" fill="none" stroke="#2a2a3a" stroke-width="1.4"/><rect x="4" y="4" width="4" height="3" fill="none" stroke="#2a2a3a" stroke-width="1"/></svg>
<svg style="position:absolute;left:240px;top:174px;" width="12" height="11" viewBox="0 0 12 11"><path d="M1.5 1.5 L10.5 9.5 M10.5 1.5 L1.5 9.5" stroke="#f0f0f0" stroke-width="2"/></svg>
<div style="left:3px;top:192px;width:30px;height:44px;background:linear-gradient(90deg,#f8f8f8,#ffffff);border-radius:4px 0 0 4px;border-top:1px solid #c0f0f8"></div>
<svg style="position:absolute;left:5px;top:202px;" width="22" height="24" viewBox="0 0 22 24"><path d="M4 2 Q10 5 6 11 Q2 17 6 22" stroke="#1a9ad0" stroke-width="1.6" fill="none"/><path d="M17 2 Q21 8 18 12 Q15 17 18 22" stroke="#1a9ad0" stroke-width="1.6" fill="none"/><path d="M8 6 H14 M7 17 H13" stroke="#e02020" stroke-width="1.2"/><path d="M14 4.5 L16 6 L14 7.5Z M13 15.5 L15 17 L13 18.5Z" fill="#e02020"/><g fill="#e02020"><circle cx="4" cy="2" r="1.4"/><circle cx="6" cy="11" r="1.4"/><circle cx="2" cy="17" r="1.4"/><circle cx="6" cy="22" r="1.4"/><circle cx="17" cy="2" r="1.4"/><circle cx="18" cy="22" r="1.4"/></g></svg>
<svg style="position:absolute;left:5px;top:250px;" width="22" height="24" viewBox="0 0 22 24"><path d="M2 5 L7 2 L12 5 L12 10 L7 13 L2 10Z" fill="#7ccaf0"/><path d="M2 5 L7 8 L12 5 L7 2Z" fill="#b8e8fa"/><path d="M7 8 V13" stroke="#3a8ab8" stroke-width="0.6"/><path d="M7 13 V21 M7 17 H12 M12 11 H18" stroke="#3a6a88" stroke-width="1"/><rect x="13" y="14" width="6" height="6" fill="#fff" stroke="#3a6a88" stroke-width="0.8"/></svg>
<svg style="position:absolute;left:5px;top:298px;" width="22" height="22" viewBox="0 0 22 22"><rect x="7" y="2" width="8" height="6" fill="#1a8ac0"/><path d="M11 8 V11 M4 11 H18 M4 11 V13 M18 11 V13" stroke="#3a6a88"/><rect x="1" y="13" width="8" height="6" fill="#1a9ad0"/><rect x="13" y="13" width="8" height="6" fill="#fff" stroke="#3a6a88" stroke-width="0.6"/></svg>
<svg style="position:absolute;left:5px;top:346px;" width="22" height="24" viewBox="0 0 22 24"><rect x="2" y="2" width="18" height="20" fill="#fff" stroke="#4a9ac8"/><rect x="2" y="2" width="18" height="3" fill="#4a9ac8"/><path d="M5 11 L11 8 L17 11 V17 L11 20 L5 17Z" fill="#f0a020"/><path d="M5 11 L11 14 L17 11 L11 8Z" fill="#f8d840"/></svg>
<svg style="position:absolute;left:4px;top:393px;" width="24" height="24" viewBox="0 0 24 24"><rect x="1" y="1" width="22" height="22" fill="#3aa8e0"/><path d="M1 16 Q8 8 14 14 T23 12 V23 H1Z" fill="#78c8f0"/><circle cx="16" cy="6" r="4" fill="#f8c020"/><path d="M2 15 H10" stroke="#f06020" stroke-width="2.5"/><path d="M9 11 L14 15 L9 19Z" fill="#f06020"/></svg>
<svg style="position:absolute;left:5px;top:442px;" width="22" height="22" viewBox="0 0 22 22"><circle cx="9" cy="6" r="4.5" fill="#2a9ad0"/><path d="M1 20 Q1 11 9 11 Q17 11 17 20Z" fill="#2a9ad0"/><circle cx="14" cy="8" r="3.5" fill="#f8c020"/><path d="M10 20 Q12 13 16 13 Q21 13 21 20Z" fill="#f8c020"/></svg>
<div style="left:32px;top:191px;width:227px;height:819px;background:#e9e9e9;border-left:2px solid #f4f8f8"></div>
<div style="left:33px;top:192px;width:225px;height:30px;background:linear-gradient(#f0f2f6 0%,#e8ebf0 40%,#d4d8e2 45%,#d8dce4 100%)"></div>
<div style="left:35px;top:195px;width:28px;height:24px;background:linear-gradient(#f0f0f0,#d8d8d8);border:1px solid #a8a8a8;border-radius:3px"></div>
<div style="left:65px;top:195px;width:28px;height:24px;background:linear-gradient(#f0f0f0,#d8d8d8);border:1px solid #a8a8a8;border-radius:3px"></div>
<div style="left:95px;top:195px;width:28px;height:24px;background:linear-gradient(#f0f0f0,#d8d8d8);border:1px solid #a8a8a8;border-radius:3px"></div>
<div style="left:211px;top:195px;width:28px;height:24px;background:linear-gradient(#f0f0f0,#d8d8d8);border:1px solid #a8a8a8;border-radius:3px"></div>
<div style="left:241px;top:195px;width:15px;height:24px;background:linear-gradient(#f0f0f0,#d8d8d8);border:1px solid #a8a8a8;border-radius:3px"></div>
<svg style="position:absolute;left:39px;top:199px;" width="20" height="16" viewBox="0 0 20 16"><path d="M2 8 L8 14 L18 3" stroke="#22b022" stroke-width="4" fill="none" stroke-linecap="round"/><path d="M3 8 L8 12" stroke="#80e060" stroke-width="1.2"/></svg>
<svg style="position:absolute;left:69px;top:199px;" width="20" height="17" viewBox="0 0 20 17"><path d="M3 2 L17 15 M17 2 L3 15" stroke="#e82828" stroke-width="4" stroke-linecap="round"/></svg>
<svg style="position:absolute;left:99px;top:199px;" width="20" height="17" viewBox="0 0 20 17"><rect x="2" y="3" width="13" height="12" fill="none" stroke="#e02828" stroke-width="2.2"/><path d="M6 8 L10 12 L18 3" stroke="#22b022" stroke-width="2.5" fill="none"/></svg>
<svg style="position:absolute;left:217px;top:198px;" width="16" height="17" viewBox="0 0 16 17"><circle cx="8" cy="8.5" r="7.3" fill="#1a50c0" stroke="#fff" stroke-width="1"/><circle cx="8" cy="5" r="1.4" fill="#fff"/><rect x="6.8" y="7.5" width="2.4" height="6" fill="#fff"/></svg>
<svg style="position:absolute;left:244px;top:199px;" width="11" height="16" viewBox="0 0 11 16"><path d="M2 1 V14 H9" stroke="#1a9ad0" stroke-width="1.4" fill="none"/><path d="M4 3 L8 8 L4 13" stroke="#e08020" stroke-width="2.2" fill="none"/></svg>
<div style="left:37px;top:223px;width:218px;height:56px;border:1.5px solid #3a3a3a;border-top:none;border-right:none;background:#ececec"></div>
<div style="left:37px;top:223px;width:218px;height:23px;background:linear-gradient(#f4f4f6 0%,#e6e8ec 35%,#c8ccd4 70%,#c4c8d0 100%);border-top:1px solid #888;border-bottom:1.5px solid #3a3e48"></div>
<svg style="position:absolute;left:41px;top:232px;" width="11" height="8" viewBox="0 0 11 8"><path d="M0.5 0.5 H10 L5.2 7.5Z" fill="#4a4e58"/></svg>
<div class="t" style="left:57px;top:229.6px;font-size:12.3px;color:#2a2a3a;font-weight:700;">Required</div>
<div class="t" style="left:46px;top:257.8px;font-size:12px;color:#111;font-weight:400;">Curves</div>
<div style="left:125px;top:252px;width:129px;height:22px;background:#f8f8f8;border:1.6px solid #18c018"></div>
<div class="t" style="left:130px;top:257.8px;font-size:12px;color:#111;font-weight:400;">3 picked</div>
<div style="left:37px;top:281px;width:218px;height:102px;border:1.5px solid #3a3a3a;border-top:none;border-right:none;background:#ececec"></div>
<div style="left:37px;top:281px;width:218px;height:23px;background:linear-gradient(#f4f4f6 0%,#e6e8ec 35%,#c8ccd4 70%,#c4c8d0 100%);border-top:1px solid #888;border-bottom:1.5px solid #3a3e48"></div>
<svg style="position:absolute;left:41px;top:290px;" width="11" height="8" viewBox="0 0 11 8"><path d="M0.5 0.5 H10 L5.2 7.5Z" fill="#4a4e58"/></svg>
<div class="t" style="left:57px;top:287.6px;font-size:12.3px;color:#2a2a3a;font-weight:700;">Settings</div>
<div class="t" style="left:46px;top:313.8px;font-size:12px;color:#111;font-weight:400;">Continuity</div>
<div style="left:119px;top:309px;width:137px;height:21px;background:#f8f8f8;border:1px solid #7a7a7a;border-right:none"></div>
<div class="t" style="left:123px;top:313.8px;font-size:12px;color:#111;font-weight:400;">Tangent</div>
<div class="t" style="left:46px;top:336.8px;font-size:12px;color:#111;font-weight:400;">Method</div>
<div style="left:119px;top:332px;width:137px;height:21px;background:#f8f8f8;border:1px solid #7a7a7a;border-right:none"></div>
<div class="t" style="left:123px;top:336.8px;font-size:12px;color:#111;font-weight:400;">Global</div>
<div class="t" style="left:46px;top:360.8px;font-size:12px;color:#111;font-weight:400;">Start points</div>
<div style="left:120px;top:356px;width:134px;height:22px;background:#f8f8f8;border:1px solid #7a7a7a"></div>
<div style="left:35px;top:991px;width:219px;height:16px;background:#3a3a3a"></div>
<div style="left:52px;top:992px;width:161px;height:14px;background:linear-gradient(#f8f8f8,#d8d8d8);border-radius:2px"></div>
<svg style="position:absolute;left:127px;top:995px;" width="9" height="9" viewBox="0 0 9 9"><path d="M1 0V9M3 0V9M5 0V9M7 0V9" stroke="#777" stroke-width="0.8"/></svg>
<svg style="position:absolute;left:39px;top:994px;" width="8" height="11" viewBox="0 0 8 11"><path d="M6 1 L1 5.5 L6 10Z" fill="#6a6a6a"/></svg>
<svg style="position:absolute;left:243px;top:994px;" width="8" height="11" viewBox="0 0 8 11"><path d="M1 1 L6 5.5 L1 10Z" fill="#8a8a8a"/></svg>
<div style="left:32px;top:1008px;width:227px;height:4px;background:#f4fafa"></div>
<div style="left:255px;top:222px;width:4px;height:790px;background:#f4fafa"></div>
<div style="left:259px;top:171px;width:1px;height:841px;background:#1a1a1a"></div>
<div style="left:260px;top:194px;width:2px;height:818px;background:#f8f8f8"></div>
<div style="left:262px;top:194px;width:1656px;height:816px;background:linear-gradient(#fdfdfd 0%,#eeeeee 15%,#d4d4d4 40%,#c4c4c4 60%,#b4b4b4 80%,#a4a4a4 100%)"></div>
<div style="left:1917px;top:195px;width:3px;height:815px;background:#f0f4f4;border-left:1px solid #d0d0d0"></div>
<div style="left:260px;top:1010px;width:1660px;height:2px;background:#f8f8f8"></div>
<div class="t" style="left:283px;top:200.5px;font-size:12.8px;color:#111;font-weight:400;">&lt;Ctrl-pick&gt; to unpick.</div>
<div class="t" style="left:283px;top:215.5px;font-size:12.8px;color:#111;font-weight:400;">&lt;right-click&gt; for entity input options.</div>
<svg style="position:absolute;left:814px;top:199px;" width="17" height="16" viewBox="0 0 17 16"><path d="M5 1 H15 V15 H5 V12 H12 V4 H5Z" fill="#1a4a70"/><path d="M1 8 L6 3 V6 H10 V10 H6 V13Z" fill="#e02020"/></svg>
<svg style="position:absolute;left:838px;top:199px;" width="19" height="16" viewBox="0 0 19 16"><path d="M1 6 L10 1 L18 8 L9 14Z" fill="#9ac8e8" stroke="#6a98b8"/><path d="M6 6 L9 4 L9 10 M11 5 L13 4 L13 10" stroke="#1a3a70" stroke-width="2" fill="none"/></svg>
<svg style="position:absolute;left:859px;top:205px;" width="7" height="4" viewBox="0 0 7 4"><path d="M0 0 H6 L3 3.5Z" fill="#666"/></svg>
<svg style="position:absolute;left:879px;top:200px;" width="13" height="14" viewBox="0 0 13 14"><path d="M3 11 L10 2 L12 4 L5 13Z" fill="#f0d070"/><path d="M3 11 L6 7 L8 9 L5 13Z" fill="#e03030"/></svg>
<svg style="position:absolute;left:900px;top:198px;" width="18" height="18" viewBox="0 0 18 18"><path d="M1 8 L9 4 L17 8 L9 12Z" fill="#f8e040"/><path d="M1 8 V13 L9 17 V12Z" fill="#9ad0ec"/><path d="M17 8 V13 L9 17 V12Z" fill="#2a8ab8"/><path d="M9 1 V7" stroke="#20a020" stroke-width="1.5"/></svg>
<svg style="position:absolute;left:925px;top:198px;" width="19" height="18" viewBox="0 0 19 18"><path d="M1 5 L10 1 L18 5 L9 9Z" fill="#8ad0f0"/><path d="M1 5 V13 L9 17 V9Z" fill="#4ab0e0"/><path d="M18 5 V13 L9 17 V9Z" fill="#1a78a8"/></svg>
<svg style="position:absolute;left:946px;top:205px;" width="7" height="4" viewBox="0 0 7 4"><path d="M0 0 H6 L3 3.5Z" fill="#666"/></svg>
<svg style="position:absolute;left:961px;top:198px;" width="19" height="18" viewBox="0 0 19 18"><path d="M1 5 L10 1 L18 5 L9 9Z M1 5 V13 L9 17 V9 M18 5 V13 L9 17" fill="#fff" stroke="#88a8c0" stroke-width="1"/></svg>
<svg style="position:absolute;left:983px;top:205px;" width="7" height="4" viewBox="0 0 7 4"><path d="M0 0 H6 L3 3.5Z" fill="#666"/></svg>
<svg style="position:absolute;left:999px;top:198px;" width="19" height="18" viewBox="0 0 19 18"><path d="M1 5 L10 1 L18 5 L9 9Z" fill="#f8c030"/><path d="M1 5 V13 L9 17 V9Z" fill="#2aa0d8"/><path d="M18 5 V13 L9 17 V9Z" fill="#1a78a8"/></svg>
<svg style="position:absolute;left:1020px;top:205px;" width="7" height="4" viewBox="0 0 7 4"><path d="M0 0 H6 L3 3.5Z" fill="#666"/></svg>
<svg style="position:absolute;left:1036px;top:198px;" width="18" height="18" viewBox="0 0 18 18"><rect x="1" y="1" width="16" height="16" fill="#cfe8f4" stroke="#2a8ab8" stroke-width="1.5"/><circle cx="9" cy="9" r="6" fill="none" stroke="#e8b020" stroke-width="2"/><rect x="7" y="5" width="5" height="7" fill="#eee" stroke="#888" stroke-width="0.6"/></svg>
<svg style="position:absolute;left:1058px;top:205px;" width="7" height="4" viewBox="0 0 7 4"><path d="M0 0 H6 L3 3.5Z" fill="#666"/></svg>
<svg style="position:absolute;left:1073px;top:199px;" width="18" height="17" viewBox="0 0 18 17"><rect x="1" y="1" width="16" height="15" fill="#fff" stroke="#6a98b8"/><path d="M3 8 V3 H8 M12 3 H15 V8 Q15 12 10 13" stroke="#6ac8e8" fill="none" stroke-dasharray="2 1"/><rect x="3" y="10" width="4" height="4" fill="#1a4a70"/></svg>
<svg style="position:absolute;left:1100px;top:198px;" width="16" height="18" viewBox="0 0 16 18"><path d="M2 1 V15 M14 1 V15" stroke="#2a8ab8" stroke-width="2"/><path d="M3 5 H13" stroke="#2a8ab8" stroke-width="1"/><path d="M2 16.5 H14" stroke="#e02020" stroke-width="1.6"/></svg>
<svg style="position:absolute;left:1120px;top:205px;" width="7" height="4" viewBox="0 0 7 4"><path d="M0 0 H6 L3 3.5Z" fill="#666"/></svg>
<svg style="position:absolute;left:1135px;top:198px;" width="19" height="18" viewBox="0 0 19 18"><rect x="1" y="1" width="17" height="14" fill="#6a6a6a"/><rect x="3" y="3" width="13" height="10" fill="#5a6a88"/><path d="M3 6 Q10 3 16 9 V13 H3Z" fill="#8a98b0"/><ellipse cx="9.5" cy="16" rx="6" ry="1.5" fill="#888"/></svg>
<svg style="position:absolute;left:1157px;top:205px;" width="7" height="4" viewBox="0 0 7 4"><path d="M0 0 H6 L3 3.5Z" fill="#666"/></svg>
<div style="left:1173px;top:204px;width:17px;height:7px;background:#000"></div>
<div style="left:1198px;top:200px;width:17px;height:16px;background:#c0e6f8;border:1.5px solid #1a0a0a"></div>
<svg style="position:absolute;left:1222px;top:199px;" width="20" height="16" viewBox="0 0 20 16"><path d="M1 6 L10 2 L19 6 L10 10Z" fill="#40c8b8"/><path d="M1 6 V9 L10 13 L19 9 V6 L10 10Z" fill="#88c8e8"/><path d="M2 10 L10 14 L18 10" stroke="#aac" fill="none"/></svg>
<svg style="position:absolute;left:1245px;top:205px;" width="7" height="4" viewBox="0 0 7 4"><path d="M0 0 H6 L3 3.5Z" fill="#666"/></svg>
<div style="left:1256px;top:196px;width:116px;height:22px;background:#f0f0f0;border:1px solid #b8c0c8"></div>
<svg style="position:absolute;left:1262px;top:200px;" width="12" height="15" viewBox="0 0 12 15"><path d="M6 1 Q11 1 11 6 Q11 9 8 11 V13 H4 V11 Q1 9 1 6 Q1 1 6 1Z" fill="#fff" stroke="#999" stroke-width="0.8"/></svg>
<svg style="position:absolute;left:1278px;top:199px;" width="15" height="16" viewBox="0 0 15 16"><circle cx="7.5" cy="8" r="6.5" fill="#e4e4e4" stroke="#999" stroke-width="1"/></svg>
<div class="t" style="left:1296px;top:202.4px;font-size:11.3px;color:#8a7878;font-weight:400;">Layer0000</div>
<svg style="position:absolute;left:1358px;top:204px;" width="7" height="4" viewBox="0 0 7 4"><path d="M0 0 H6 L3 3.5Z" fill="#bbb"/></svg>
<svg style="position:absolute;left:0px;top:0px;" width="1920" height="1041" viewBox="0 0 1920 1041"><defs><linearGradient id="holeg" x1="0.2" y1="0" x2="0.6" y2="1"><stop offset="0" stop-color="#3a4a52"/><stop offset="0.55" stop-color="#a8c0ca"/><stop offset="1" stop-color="#b8d0da"/></linearGradient><linearGradient id="sideg" x1="0" y1="0" x2="1" y2="0"><stop offset="0" stop-color="#5a6e78"/><stop offset="0.5" stop-color="#8aa2ae"/><stop offset="1" stop-color="#6a8290"/></linearGradient><linearGradient id="cylg" x1="0" y1="0" x2="0" y2="1"><stop offset="0" stop-color="#b8ccd6"/><stop offset="0.6" stop-color="#9ab2be"/><stop offset="1" stop-color="#4a5e68"/></linearGradient><radialGradient id="bossg" cx="0.3" cy="0.45" r="0.7"><stop offset="0" stop-color="#b8cdd6"/><stop offset="0.7" stop-color="#9cb4c0"/><stop offset="1" stop-color="#6e8692"/></radialGradient></defs><path d="M1083.5 304 C1083.5 292 1092 284 1100 283 L1107 281 L1181 295 C1190 298 1197 306 1198 316 L1199 320 L1202 420 C1204 432 1200 440 1186 442 C1176 443 1165 440 1160 435 L1109 425 C1096 424 1087 414 1087.5 402 C1088 394 1092 388 1093 384 L1092.5 326 C1088 320 1083.5 314 1083.5 304 Z" fill="#9cb6c2" stroke="#1a2228" stroke-width="1.4"/><path d="M1187 326 L1199 320 L1202 420 L1194 418 Z" fill="url(#sideg)" stroke="#1a2228" stroke-width="1"/><path d="M1194 418 L1202 420 C1203 430 1200 438 1190 441 C1192 432 1194 425 1194 418Z" fill="#6a8290" stroke="#1a2228" stroke-width="0.8"/><ellipse cx="1097" cy="307" rx="13.5" ry="21" fill="none" stroke="#1a2228" stroke-width="0.9" stroke-dasharray="3 0.7"/><ellipse cx="1169" cy="320" rx="14" ry="22" fill="none" stroke="#1a2228" stroke-width="0.9" stroke-dasharray="3 0.7"/><ellipse cx="1101" cy="405" rx="14" ry="19" fill="none" stroke="#1a2228" stroke-width="0.9" stroke-dasharray="3 0.7"/><ellipse cx="1170" cy="419" rx="14" ry="21" fill="none" stroke="#1a2228" stroke-width="0.9" stroke-dasharray="3 0.7"/><path d="M1106 282 L1181 295 C1170 297 1163 300 1159 306 L1153 316 C1150 318 1146 318 1140 317 L1126 313 C1119 309 1112 296 1106 282Z" fill="#a8c0ca" stroke="#1a2228" stroke-width="1.3"/><path d="M1111 286 L1176 299 M1116 292 C1120 302 1124 307 1132 309 L1150 313 L1156 303 C1160 300 1166 299 1172 298" stroke="#1a2228" stroke-width="1" fill="none"/><path d="M1119 300 L1126 311" stroke="#1a2228" stroke-width="0.8" fill="none"/><path d="M1166 345 C1168 340 1176 336 1187 327 L1194 418 C1188 411 1180 405 1173 398 C1166 391 1164 384 1164 372Z" fill="#a6bec8" stroke="#1a2228" stroke-width="1.3"/><path d="M1171 347 C1175 342 1181 339 1188 333 M1170 352 L1171 385 C1173 393 1180 400 1190 409 M1176 350 L1177 386 C1179 392 1184 398 1190 402" stroke="#1a2228" stroke-width="0.9" fill="none"/><path d="M1116 407 C1125 402 1140 406 1153 412 C1158 418 1160 428 1162 435 L1109 425 C1112 420 1114 412 1116 407Z" fill="#a8c0ca" stroke="#1a2228" stroke-width="1.3"/><path d="M1120 411 C1130 410 1142 413 1150 417 M1119 414 L1113 424 M1124 413 L1118 425" stroke="#1a2228" stroke-width="0.9" fill="none"/><path d="M1126 416 L1150 421" stroke="#1a2228" stroke-width="1" stroke-dasharray="2 1" fill="none"/><ellipse cx="1097" cy="307.5" rx="7.5" ry="10.3" fill="#8aa4b0" stroke="#1a2228" stroke-width="0.9"/><ellipse cx="1097.5" cy="308.0" rx="6.2" ry="9" fill="url(#holeg)" stroke="#1a2228" stroke-width="0.9"/><ellipse cx="1165.5" cy="321" rx="7.5" ry="10.3" fill="#8aa4b0" stroke="#1a2228" stroke-width="0.9"/><ellipse cx="1166.0" cy="321.5" rx="6.2" ry="9" fill="url(#holeg)" stroke="#1a2228" stroke-width="0.9"/><ellipse cx="1101.5" cy="406" rx="7.5" ry="10.3" fill="#8aa4b0" stroke="#1a2228" stroke-width="0.9"/><ellipse cx="1102.0" cy="406.5" rx="6.2" ry="9" fill="url(#holeg)" stroke="#1a2228" stroke-width="0.9"/><ellipse cx="1169.5" cy="419" rx="7.5" ry="10.3" fill="#8aa4b0" stroke="#1a2228" stroke-width="0.9"/><ellipse cx="1170.0" cy="419.5" rx="6.2" ry="9" fill="url(#holeg)" stroke="#1a2228" stroke-width="0.9"/><ellipse cx="1128" cy="364" rx="28" ry="32" fill="url(#bossg)" stroke="#1a2228" stroke-width="1.1"/><ellipse cx="1125" cy="366" rx="23" ry="27.5" fill="none" stroke="#1a2228" stroke-width="0.9" stroke-dasharray="2.5 0.6"/><ellipse cx="1122" cy="367.5" rx="18.5" ry="23" fill="url(#bossg)" stroke="#1a2228" stroke-width="1"/><ellipse cx="1120" cy="368.5" rx="13" ry="17" fill="none" stroke="#1a2228" stroke-width="0.8" stroke-dasharray="2.5 0.6"/><path d="M1100 355 L1116 352 C1122 360 1122 378 1116 386 L1102 388Z" fill="url(#cylg)"/><ellipse cx="1101" cy="371" rx="11" ry="16.5" fill="#8ea6b2" stroke="#1a2228" stroke-width="1.3"/><ellipse cx="1102" cy="371" rx="8.5" ry="13.5" fill="url(#holeg)" stroke="#1a2228" stroke-width="1"/><path d="M893 760 L912 757 L915 834 L894 839Z" fill="rgba(100,110,170,0.22)" stroke="#2020ff" stroke-width="1.2"/><path d="M897 766 L910 769 L914 846 L893 846Z" fill="rgba(100,160,100,0.25)" stroke="#20e020" stroke-width="1.2"/><path d="M888 791 L940 801 L893 813Z" fill="rgba(200,110,110,0.2)" stroke="#ff2020" stroke-width="1"/><path d="M872 749 C880 745 892 752 897 766 C900 776 898 784 894 786 L880 782Z" fill="#8ea6b2" stroke="#1a2228" stroke-width="0.9"/><path d="M886 848 C896 850 902 862 902 872 C902 884 896 890 886 891 L880 880Z" fill="url(#sideg)" stroke="#1a2228" stroke-width="0.9"/><path d="M782.5 754 C783 744 788 738 795 737.5 C802 735 808 733 812 733.5 C816 734 818 736 820 737 L870 749 C878 751 881 758 881 766 L883 878 C884 886 880 891 871 891 L801 877.5 C792 876 786 866 786.5 857 L782.5 760Z" fill="#9cb6c2" stroke="#1a2228" stroke-width="1.4"/><path d="M790 741 L871 754 M789 744 L870 757" stroke="#1a2228" stroke-width="0.8" fill="none"/><path d="M801 880 L872 894" stroke="#1a2228" stroke-width="0.8" stroke-dasharray="2 0.7"/><path d="M879 776 L893 775 L894.5 872 L887.5 874 L882 874Z" fill="url(#sideg)" stroke="#1a2228" stroke-width="1.1"/><path d="M884 776 L886.5 873" stroke="#1a2228" stroke-width="0.8"/><ellipse cx="796" cy="760.3" rx="8.3" ry="10.9" fill="#8aa4b0" stroke="#1a2228" stroke-width="0.9"/><ellipse cx="796.5" cy="760.8" rx="7" ry="9.6" fill="url(#holeg)" stroke="#1a2228" stroke-width="0.9"/><ellipse cx="864.3" cy="773.7" rx="8.3" ry="10.9" fill="#8aa4b0" stroke="#1a2228" stroke-width="0.9"/><ellipse cx="864.8" cy="774.2" rx="7" ry="9.6" fill="url(#holeg)" stroke="#1a2228" stroke-width="0.9"/><ellipse cx="832.6" cy="815.5" rx="10.8" ry="14.8" fill="#8aa4b0" stroke="#1a2228" stroke-width="0.9"/><ellipse cx="833.1" cy="816.0" rx="9.5" ry="13.5" fill="url(#holeg)" stroke="#1a2228" stroke-width="0.9"/><ellipse cx="799.8" cy="857.8" rx="8.3" ry="11.3" fill="#8aa4b0" stroke="#1a2228" stroke-width="0.9"/><ellipse cx="800.3" cy="858.3" rx="7" ry="10" fill="url(#holeg)" stroke="#1a2228" stroke-width="0.9"/><ellipse cx="868.4" cy="871" rx="8.3" ry="11.3" fill="#8aa4b0" stroke="#1a2228" stroke-width="0.9"/><ellipse cx="868.9" cy="871.5" rx="7" ry="10" fill="url(#holeg)" stroke="#1a2228" stroke-width="0.9"/><path d="M856 760 L856 850 M860 792 L906 800 M836 798 L895 812" stroke="rgba(80,90,100,0.25)" stroke-width="0.8" fill="none"/><path d="M855 799 L880 797" stroke="rgba(80,90,230,0.55)" stroke-width="3.5"/><circle cx="863" cy="798" r="3" fill="rgba(80,90,230,0.6)"/><text x="842" y="801" font-size="11" fill="rgba(90,90,230,0.6)" font-family="Liberation Sans">Z</text><path d="M884 778 V757" stroke="rgba(230,120,120,0.45)" stroke-width="3"/><path d="M880 767 L884 755 L888 767Z" fill="rgba(230,120,120,0.45)"/><text x="879" y="750" font-size="11" fill="rgba(240,50,50,0.85)" font-family="Liberation Sans">X</text><path d="M1108 371 C1105.0 372.2 1101.8 373.2 1090 378 C1078.2 382.8 1050.2 392.3 1037 400 C1023.8 407.7 1018.0 414.3 1011 424 C1004.0 433.7 998.8 445.2 995 458 C991.2 470.8 989.4 484.8 988.5 501 C987.6 517.2 988.8 541.0 989.5 555 C990.2 569.0 992.4 580.0 993 585" stroke="#a8f070" stroke-width="3.6" fill="none" transform="translate(0.6,0)"/><path d="M1108 371 C1105.0 372.2 1101.8 373.2 1090 378 C1078.2 382.8 1050.2 392.3 1037 400 C1023.8 407.7 1018.0 414.3 1011 424 C1004.0 433.7 998.8 445.2 995 458 C991.2 470.8 989.4 484.8 988.5 501 C987.6 517.2 988.8 541.0 989.5 555 C990.2 569.0 992.4 580.0 993 585" stroke="#fcb800" stroke-width="3.2" fill="none"/><path d="M1108 371 C1105.0 372.2 1101.8 373.2 1090 378 C1078.2 382.8 1050.2 392.3 1037 400 C1023.8 407.7 1018.0 414.3 1011 424 C1004.0 433.7 998.8 445.2 995 458 C991.2 470.8 989.4 484.8 988.5 501 C987.6 517.2 988.8 541.0 989.5 555 C990.2 569.0 992.4 580.0 993 585" stroke="#2a3a20" stroke-width="1.3" fill="none" stroke-dasharray="0.9 7.5"/><path d="M993 585 C993.8 595.8 997.8 630.0 998 650 C998.2 670.0 997.7 689.3 994 705 C990.3 720.7 984.7 732.0 976 744 C967.3 756.0 953.2 768.2 942 777 C930.8 785.8 919.3 792.7 909 797 C898.7 801.3 884.8 802.0 880 803" stroke="#f8b000" stroke-width="2.6" fill="none" transform="translate(-0.8,0.4)"/><path d="M993 585 C993.8 595.8 997.8 630.0 998 650 C998.2 670.0 997.7 689.3 994 705 C990.3 720.7 984.7 732.0 976 744 C967.3 756.0 953.2 768.2 942 777 C930.8 785.8 919.3 792.7 909 797 C898.7 801.3 884.8 802.0 880 803" stroke="#98e868" stroke-width="1.8" fill="none" transform="translate(0.4,0)"/><path d="M993 585 C993.8 595.8 997.8 630.0 998 650 C998.2 670.0 997.7 689.3 994 705 C990.3 720.7 984.7 732.0 976 744 C967.3 756.0 953.2 768.2 942 777 C930.8 785.8 919.3 792.7 909 797 C898.7 801.3 884.8 802.0 880 803" stroke="#4a5a30" stroke-width="0.5" fill="none" stroke-dasharray="4 4"/><path d="M940 779 C925 790 915 795 900 800" stroke="#fcb800" stroke-width="3.2" fill="none"/><path d="M868 805 L905 798" stroke="rgba(240,200,80,0.7)" stroke-width="3"/><path d="M885 799 L905 796" stroke="#18c018" stroke-width="4"/><path d="M900 791 L918 795 L901 802Z" fill="#10a010"/><text x="922" y="797" font-size="11" fill="#20d020" font-family="Liberation Sans">Y</text></svg>
<svg style="position:absolute;left:270px;top:890px;" width="100" height="70" viewBox="0 0 100 70"><defs><linearGradient id="rg" x1="0" x2="1"><stop offset="0" stop-color="#c00000"/><stop offset="0.45" stop-color="#ff5050"/><stop offset="1" stop-color="#c00000"/></linearGradient></defs><text x="40.5" y="13" font-size="14" fill="#ff1a1a" font-family="Liberation Sans">X</text><text x="4.5" y="60.5" font-size="14" fill="#1a1aff" font-family="Liberation Sans">Z</text><text x="84.5" y="58" font-size="14" fill="#10e010" font-family="Liberation Sans">Y</text><path d="M47.5 65 L26 58" stroke="#0a0ad8" stroke-width="6.5"/><path d="M15.4 55.8 L29 50.5 L27 64Z" fill="#0000c8"/><path d="M48 65 L71 58.5" stroke="#18d018" stroke-width="6"/><path d="M82.6 54.7 L69 50.5 L72 63.5Z" fill="#0a8a0a"/><ellipse cx="70" cy="57" rx="2.5" ry="6" fill="#20ff20" opacity="0.7"/><rect x="44" y="30" width="7" height="35" fill="url(#rg)"/><path d="M40.8 32.5 L46.5 17 L52.5 32.5Z" fill="url(#rg)"/></svg>
<div class="t" style="left:266px;top:992.0px;font-size:15.4px;color:#111;font-weight:400;">22.3658 in</div>
<svg style="position:absolute;left:0px;top:0px;pointer-events:none" width="1920" height="1041" viewBox="0 0 1920 1041"><defs><filter id="sh" x="-10%" y="-10%" width="120%" height="120%"><feGaussianBlur in="SourceAlpha" stdDeviation="2.5"/><feOffset dx="3" dy="3"/><feComponentTransfer><feFuncA type="linear" slope="0.55"/></feComponentTransfer><feMerge><feMergeNode/><feMergeNode in="SourceGraphic"/></feMerge></filter></defs><g filter="url(#sh)"><line x1="648" y1="382" x2="934.3" y2="113.0" stroke="#ff0a0a" stroke-width="3.9"/><polygon points="946,102 935.0,125.4 932.9,114.3 922.0,111.5" fill="#ff0a0a"/><line x1="830" y1="430" x2="1096.4" y2="371.4" stroke="#ff0a0a" stroke-width="3.9"/><polygon points="1112,368 1090.6,382.4 1094.4,371.9 1086.5,363.9" fill="#ff0a0a"/><line x1="830" y1="462" x2="979.3" y2="576.3" stroke="#ff0a0a" stroke-width="3.9"/><polygon points="992,586 967.2,579.0 977.7,575.1 978.7,563.9" fill="#ff0a0a"/><line x1="818" y1="494" x2="874.0" y2="787.3" stroke="#ff0a0a" stroke-width="3.9"/><polygon points="877,803 863.2,781.2 873.6,785.3 881.8,777.6" fill="#ff0a0a"/><rect x="429.75" y="381.75" width="400.5" height="112.1" rx="11" fill="#ffffcc" stroke="#fc2228" stroke-width="5.5"/></g></svg>
<div class="t" style="left:328.5px;width:600px;text-align:center;top:401.5px;font-size:15.9px;color:#111;font-weight:700;">Next we want to use the Concatenate tool to</div>
<div class="t" style="left:328.5px;width:600px;text-align:center;top:420.5px;font-size:15.9px;color:#111;font-weight:700;">merge the three curves into a single curve. Set</div>
<div class="t" style="left:328.5px;width:600px;text-align:center;top:439.5px;font-size:15.9px;color:#111;font-weight:700;">the Continuity to Tangent and the Method to</div>
<div class="t" style="left:328.5px;width:600px;text-align:center;top:458.5px;font-size:15.9px;color:#111;font-weight:700;">Global.</div>
<div style="left:0px;top:1012px;width:1920px;height:1px;background:#1a1a1a"></div>
<div style="left:0px;top:1013px;width:1474px;height:28px;background:linear-gradient(#3c4048 0%,#3a3e46 30%,#2e2e2e 32%,#2c2c2c 100%)"></div>
<div class="t" style="left:6px;top:1021.1px;font-size:11.7px;color:#ffffff;font-weight:400;">Select curves to be concatenated.</div>
<div style="left:1474px;top:1013px;width:2px;height:28px;background:#111"></div>
<div style="left:1476px;top:1013px;width:444px;height:28px;background:linear-gradient(#e8e8e8 0%,#c8c8c8 30%,#8a8e94 62%,#4a5058 84%,#383838 100%)"></div>
<div style="left:1482px;top:1016px;width:21px;height:21px;background:linear-gradient(#fce0b0,#f8c060 60%,#f8d080);border:1px solid #c89a50;border-radius:2px"></div>
<svg style="position:absolute;left:1484px;top:1018px;" width="17" height="17" viewBox="0 0 17 17"><rect x="1" y="1" width="14" height="14" fill="#fff" stroke="#2a6ac8" stroke-width="1.2"/><rect x="1" y="1" width="14" height="2" fill="#4a8ae8"/><path d="M4 5V13" stroke="#2a6ac8" stroke-dasharray="1 1.5"/><path d="M10 14 V6 M7 6 Q10 3 13 6" stroke="#d02020" stroke-width="2" fill="none"/></svg>
<svg style="position:absolute;left:1513px;top:1019px;" width="16" height="14" viewBox="0 0 16 14"><rect x="1" y="1" width="14" height="9" fill="#5ac8e8" stroke="#5a6a78" stroke-width="0.8"/><rect x="5" y="11" width="6" height="2" fill="#555"/></svg>
<svg style="position:absolute;left:1543px;top:1018px;" width="15" height="15" viewBox="0 0 15 15"><rect x="1" y="1" width="13" height="13" fill="#fff" stroke="#2a6ac8" stroke-width="1.2"/><rect x="1" y="1" width="13" height="2" fill="#4a8ae8"/><path d="M3 6 H12 M3 8.5 H11 M3 11 H10" stroke="#555" stroke-width="1"/></svg>
<div style="left:1569px;top:1016px;width:349px;height:21px;background:#fafafa;border:1px solid #888"></div>
<div style="left:1651px;top:1040px;width:36px;height:1px;background:#c87020"></div>
<div style="left:1690px;top:1040px;width:17px;height:1px;background:#ffffff"></div>
</body></html>
